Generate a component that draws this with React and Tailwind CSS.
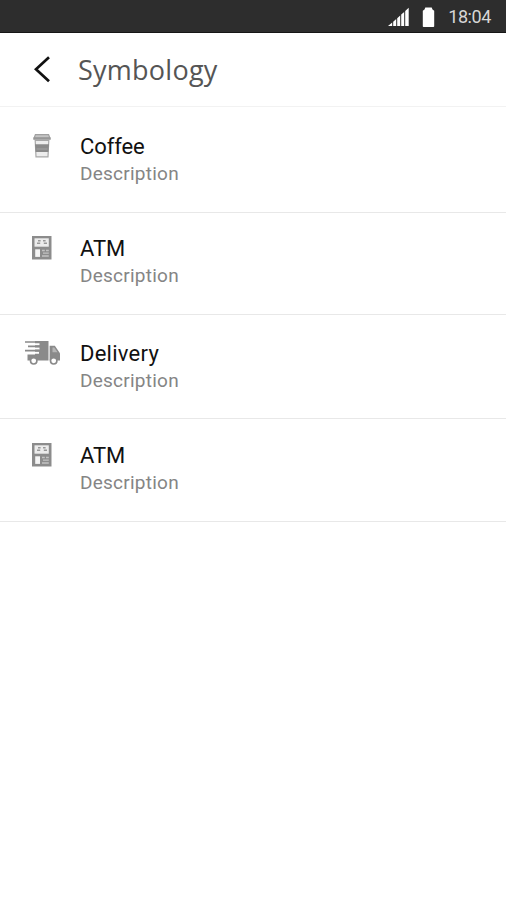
const items = [
  { icon: "coffee", title: "Coffee", row: "h-[105px] pt-[25px]", tracking: "tracking-[-0.1px]" },
  { icon: "atm", title: "ATM", row: "h-[102px] pt-[22px]", tracking: "tracking-normal" },
  { icon: "truck", title: "Delivery", row: "h-[104px] pt-[25px]", tracking: "tracking-[0.25px]" },
  { icon: "atm", title: "ATM", row: "h-[103px] pt-[23px]", tracking: "tracking-normal" },
];

function CoffeeIcon() {
  return (
    <svg className="h-[40px] w-[40px]" viewBox="0 0 40 40" fill="none">
      <path d="M14.4 8.6h13.2l1.2 3.2H13.2z" fill="#c4c4c4" stroke="#a0a0a0" strokeWidth="1.2" />
      <path d="M12.3 11.4h17.4v2.4H12.3z" fill="#979797" />
      <path d="M14.2 14.4l.8 16.4h12l.8-16.4z" fill="#ededed" stroke="#a8a8a8" strokeWidth="1.2" />
      <path d="M14 18.2h14l-.6 7.8H14.6z" fill="#8a8a8a" />
      <path d="M15.5 23h11" stroke="#a2a2a2" />
    </svg>
  );
}

function AtmIcon() {
  return (
    <svg className="h-[40px] w-[40px]" viewBox="0 0 40 40" fill="none">
      <path d="M11 8h19.5v23.5H11z" fill="#8c8c8c" />
      <path d="M13.5 10.3h14.3v8.4H13.5z" fill="#ececec" />
      <path d="M16 15.2h3.2M22.8 15.2H26M17 12.8h2.6M22 12.8h2.6" stroke="#989898" strokeWidth="1.4" />
      <path d="M14.2 21.3H19v7.6h-4.8z" fill="#f5f5f5" />
      <path d="M21 22.5h2.8M25 22.5h2.8M22 25.2h5.8M21 28h6.8" stroke="#c2c2c2" strokeWidth="1.3" />
    </svg>
  );
}

function TruckIcon() {
  return (
    <svg className="h-[40px] w-[40px]" viewBox="0 0 40 40" fill="none">
      <path d="M14 8h13.5v19.5H6.5v-6H14z" fill="#8a8a8a" />
      <path d="M13 11.2h5.5M13 15.5h5.5M6 19.8h12" stroke="#fff" strokeWidth="2" />
      <path d="M28.6 12.8h5.2l5.2 7.4v7.3H28.6z" fill="#8a8a8a" />
      <path d="M31.5 14.6h1.8l3.2 4.6h-5z" fill="#b5b5b5" />
      <path d="M4 9h12M7 13.4h12M4 17.6h14" stroke="#8a8a8a" strokeWidth="1.7" />
      <circle cx="12.7" cy="27.8" r="3.2" fill="#fff" stroke="#8a8a8a" strokeWidth="1.6" />
      <circle cx="32.7" cy="27.8" r="3.2" fill="#fff" stroke="#8a8a8a" strokeWidth="1.6" />
    </svg>
  );
}

const icons = { coffee: CoffeeIcon, atm: AtmIcon, truck: TruckIcon };

function StatusBar() {
  return (
    <div className="flex h-[33px] items-center justify-end border-b border-[#161616] bg-[#2d2d2d] pr-[15px]">
      <svg className="mt-[2px] h-[20px] w-[22px]" viewBox="0 0 22 20" fill="#fff">
        <path d="M0 19l4.2-3.5V19zM5.2 14.7l3-2.6V19h-3zM9.2 11.2l3-2.7V19h-3zM13.2 7.6l3-2.7V19h-3zM17.2 4l3.5-3.2V19h-3.5z" />
      </svg>
      <svg className="mt-[2px] ml-[12px] h-[20px] w-[13px]" viewBox="0 0 13 20" fill="#fff">
        <path d="M3.3.5h6.4l.8 2 1.7 1.2v15.5a.8.8 0 0 1-.8.8H1.6a.8.8 0 0 1-.8-.8V3.7l1.7-1.2z" />
      </svg>
      <span className="mt-[2px] ml-[13px] text-[18px] leading-none tracking-[-0.4px] text-[#d6d6d6]">18:04</span>
    </div>
  );
}

export default function App() {
  return (
    <div className="h-[900px] w-[506px] overflow-hidden bg-white font-['Roboto',sans-serif]">
      <StatusBar />
      <header className="flex h-[74px] items-center border-b border-[#f2f2f2]">
        <svg className="ml-[32px] h-[30px] w-[20px]" viewBox="0 0 20 30" fill="none">
          <path d="M17 2.2L4 14.2l13 12" stroke="#111" strokeWidth="2.7" />
        </svg>
        <h1 className="ml-[26px] font-['Open_Sans',sans-serif] text-[27px] leading-[36px] font-normal tracking-[0.25px] text-[#555]">
          Symbology
        </h1>
      </header>
      <ul className="pt-px">
        {items.map((item, index) => {
          const Icon = icons[item.icon];

          return (
            <li key={index} className={`flex border-b border-[#e8e8e8] ${item.row}`}>
              <div className="-mt-[7px] ml-[21px]">
                <Icon />
              </div>
              <div className="ml-[19px]">
                <p className={`text-[22px] leading-[28px] text-[#111] ${item.tracking}`}>{item.title}</p>
                <p className="text-[19px] leading-[26px] tracking-[0.25px] text-[#858585]">Description</p>
              </div>
            </li>
          );
        })}
      </ul>
    </div>
  );
}
